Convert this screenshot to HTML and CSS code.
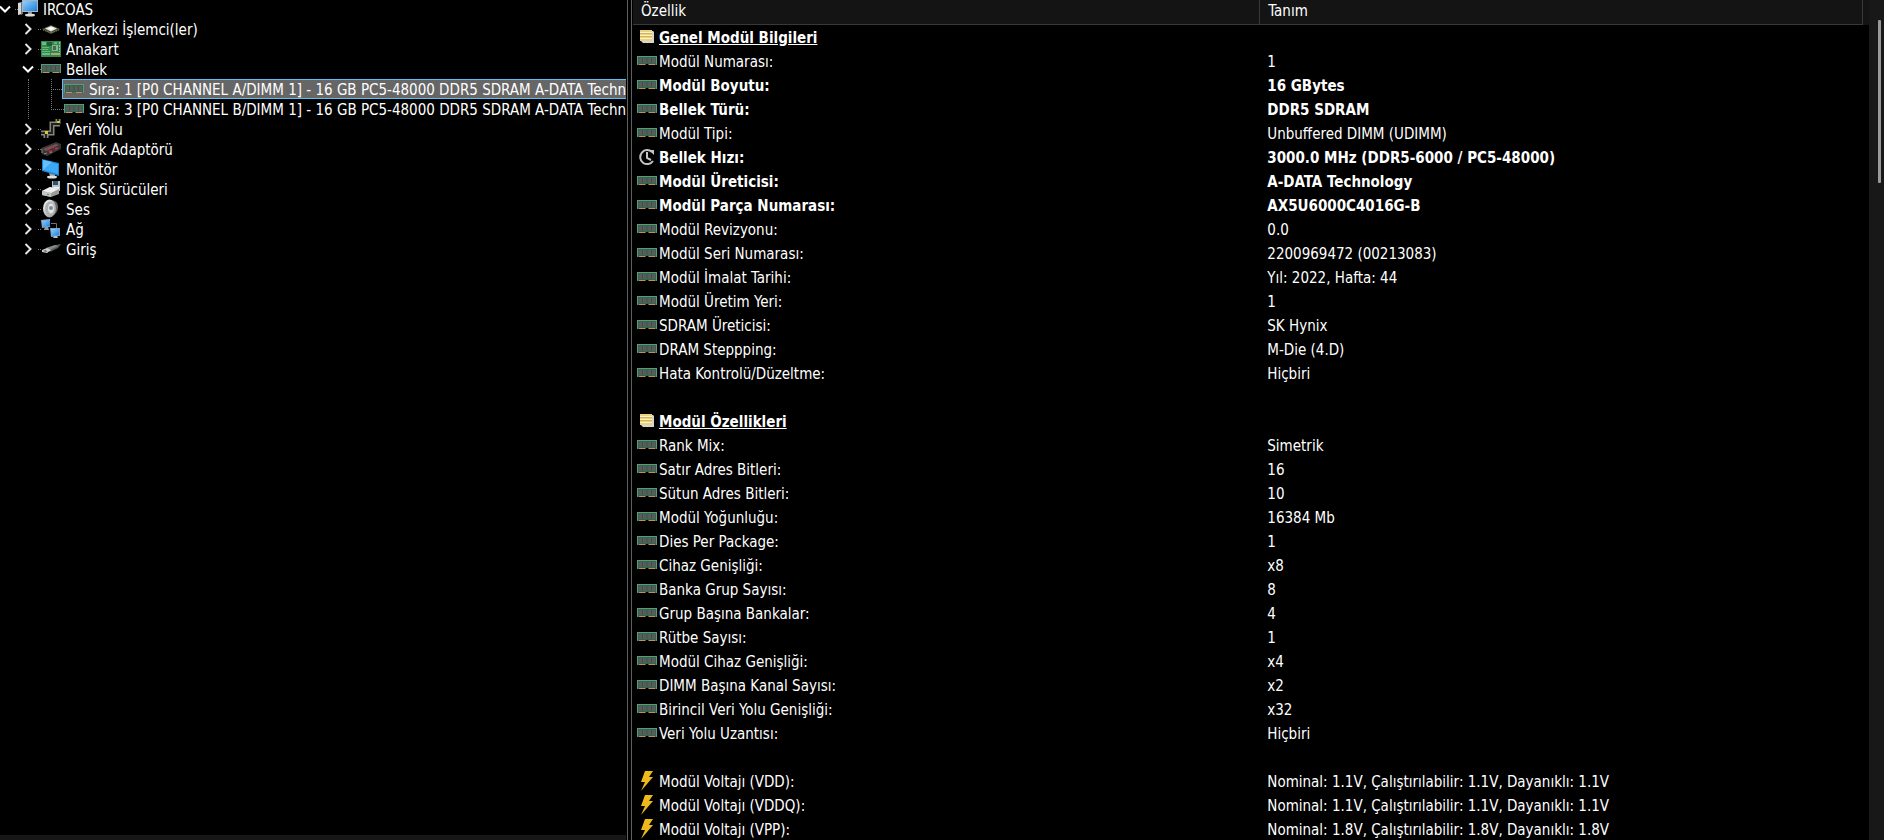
FILE: index.html
```html
<!DOCTYPE html>
<html lang="tr">
  <head>
    <meta charset="UTF-8" />
    <meta name="viewport" content="width=device-width, initial-scale=1.0" />
    <title>IRCOAS - Bellek</title>
    <link rel="stylesheet" href="styles.css">
  </head>

  <body>
    <!-- Simgeler -->
    <svg class="sprite" aria-hidden="true">
      <defs>
        <linearGradient id="blue" x1="0" y1="0" x2="1" y2="1">
          <stop offset="0" stop-color="#8fd0ff" />
          <stop offset="1" stop-color="#1c7fdc" />
        </linearGradient>
        <linearGradient id="silver" x1="0" y1="0" x2="1" y2="1">
          <stop offset="0" stop-color="#ffffff" />
          <stop offset="1" stop-color="#8c8c8c" />
        </linearGradient>
      </defs>
      <symbol id="right" viewBox="0 0 12 12">
        <path d="M3.500 1l5 5-5 5" fill="none" stroke="#e4e4e4" stroke-width="2" />
      </symbol>
      <symbol id="down" viewBox="0 0 12 12">
        <path d="M1 3.500l5 5 5-5" fill="none" stroke="#ffffff" stroke-width="2" />
      </symbol>
      <symbol id="computer" viewBox="0 0 20 20">
        <path d="M0 4l4-1v12l-4 1z" fill="#d8d8d8" />
        <path d="M3 3h2v12l-2 1z" fill="#777" />
        <path d="M4 1h16v12H4z" fill="#a9b4bd" />
        <path d="M5 2h14v10H5z" fill="url(#blue)" />
        <path d="M10 13h4v2h-4z" fill="#888" />
        <ellipse cx="12" cy="16" rx="5" ry="1.500" fill="#dcdcdc" />
      </symbol>
      <symbol id="cpu" viewBox="0 0 20 20">
        <path d="M1 10l9-4 9 4-9 5z" fill="#46523a" />
        <path d="M2 11l8 3 8-3" fill="none" stroke="#a08a4c" stroke-width="1" stroke-dasharray="1 1" />
        <path d="M4 9.500L10 7l6 2.500-6 3z" fill="#dfe3e0" />
        <path d="M7 9.500L10 8l3 1.500-3 1.500z" fill="#ffffff" />
      </symbol>
      <symbol id="board" viewBox="0 0 20 20">
        <path d="M0 2h20v16H0z" fill="#2f8a4c" />
        <path d="M1 3h4v3H1zM1 14h8v2H1z" fill="#6fb883" />
        <path d="M6 3h5v4H6z" fill="#1c5c33" />
        <path d="M11 6h6v6h-6z" fill="#8fae98" />
        <path d="M12 7h3v4h-3z" fill="#456a50" />
        <path d="M1 8.500h7M1 10.500h6M1 12.500h8" stroke="#69b47d" stroke-width="1" />
        <path d="M18.500 3v10" stroke="#8ccb9b" stroke-width="1" stroke-dasharray="2 1" />
        <path d="M10 14h9v2h-9z" fill="#b4a56a" />
        <path d="M13 3h3v2h-3z" fill="#5eb777" />
      </symbol>
      <symbol id="ram" viewBox="0 0 20 20">
        <path d="M0 5h20v9h-9v-1H9v1H0z" fill="#35644e" />
        <path d="M0 5.500h20M.5 5v9M19.500 5v9" stroke="#5a9a7b" stroke-width="1" />
        <path d="M2 7h3v5H2zM6 7h3v5H6zM11 7h3v5h-3zM15 7h3v5h-3z" fill="#585c5a" />
        <path d="M5.500 7v5M14.500 7v5" stroke="#444c48" stroke-width="1" />
        <path d="M2 13.500h6M12 13.500h6" stroke="#c49052" stroke-width="1" />
      </symbol>
      <symbol id="bus" viewBox="0 0 20 20">
        <path d="M5 19v-5H0M5 14h6V5h8M17 5V0" fill="none" stroke="#85857f" stroke-width="5" />
        <path d="M5 19v-5H0M5 14h6V5h8M17 5V0" fill="none" stroke="#24241f" stroke-width="2" />
        <path d="M4 12h3v3H4zM16 2h3v2h-3z" fill="#d6cb32" />
      </symbol>
      <symbol id="gpu" viewBox="0 0 20 20">
        <path d="M0 9l15-6 5 2v5L6 17l-5-2z" fill="#393637" />
        <path d="M2 10l13-5 3 1-13 6z" fill="#625d5e" />
        <path d="M5 9l3 2M10 7l3 2M8 13l3-1M14 10l3-1" stroke="#b32f39" stroke-width="2" />
        <path d="M3 15l3-1M9 14l2-1M1 10v4" stroke="#858585" stroke-width="1" />
      </symbol>
      <symbol id="monitor" viewBox="0 0 20 20">
        <path d="M8 13l6 1v4H9z" fill="#8d989f" />
        <ellipse cx="11" cy="18" rx="5" ry="1.500" fill="#e0e0e0" />
        <path d="M1 0l17 4v13L1 12z" fill="#1c83cc" />
        <path d="M2 1l15 4v10L2 11z" fill="#3ba9f7" />
        <path d="M2 1l9 2-9 8z" fill="#66befb" />
      </symbol>
      <symbol id="disk" viewBox="0 0 20 20">
        <path d="M11 2h8v10h-8z" fill="#b8c0c8" />
        <path d="M12 2h5v4h-5z" fill="#34536e" />
        <path d="M12 8h6v4h-6z" fill="#f4f4f4" />
        <path d="M1 12l8-4 9 2v5l-8 3-9-2z" fill="#9b9b9b" />
        <path d="M1 12l8-4 9 2-8 4z" fill="#eeeeee" />
        <path d="M1 12l9 2v4l-9-2z" fill="#c4c4c4" />
        <path d="M6 15h2v1H6z" fill="#2fae42" />
      </symbol>
      <symbol id="speaker" viewBox="0 0 20 20">
        <path d="M9 1c6 0 8 3 8 7s-2 7-7 10z" fill="#666" />
        <ellipse cx="8.500" cy="9.500" rx="6.500" ry="9" fill="url(#silver)" />
        <ellipse cx="9" cy="9.500" rx="5" ry="7" fill="#aeb4b6" />
        <ellipse cx="10" cy="9.500" rx="3" ry="5" fill="#dfe4e5" />
        <circle cx="10" cy="9" r="2" fill="#7f898c" />
      </symbol>
      <symbol id="network" viewBox="0 0 20 20">
        <path d="M10 4.500h5.500V9" fill="none" stroke="#6e7376" stroke-width="1" />
        <path d="M0 1l9-1v8l-8 1z" fill="#7fa3c8" />
        <path d="M1 2l8-1v6l-7 1z" fill="url(#blue)" />
        <path d="M4 8h3l1 3H3z" fill="#999" />
        <path d="M9 9h10v8l-9 1z" fill="#7fa3c8" />
        <path d="M10 10h8v6l-7 1z" fill="url(#blue)" />
        <path d="M13 17h3l1 2h-5z" fill="#bbb" />
      </symbol>
      <symbol id="input" viewBox="0 0 20 20">
        <path d="M6 9l9-3 5-1-3 4-8 4z" fill="#55585a" />
        <path d="M5 9l9-3 3 1-8 4z" fill="#878a8b" />
        <path d="M1 11l5-2 4 2-4 3-5-1z" fill="#cfcfcf" />
        <path d="M2 12l3-1 1 2z" fill="#575757" />
      </symbol>
      <symbol id="notes" viewBox="0 0 20 20">
        <path d="M4 4h12l1 1v11H6l-2-2z" fill="#d9d7cb" />
        <path d="M3 3h12v11H3z" fill="#ead184" />
        <path d="M3 5.500h12M3 8.500h12M3 11.500h12" stroke="#fff2c0" stroke-width="1" />
        <path d="M3 6.500h12M3 9.500h12" stroke="#d2b358" stroke-width="1" />
      </symbol>
      <symbol id="clock" viewBox="0 0 20 20">
        <path d="M15 5a7 7 0 1 0 1 9" fill="none" stroke="#c4c4c4" stroke-width="2" />
        <path d="M12 3l5 0v5z" fill="#c4c4c4" />
        <path d="M10 5v6l4 2" fill="none" stroke="#c4c4c4" stroke-width="2" />
      </symbol>
      <symbol id="bolt" viewBox="0 0 20 20">
        <path d="M8 0h8l-4 6h4L4 20l4-9H4z" fill="#edb91b" />
      </symbol>
    </svg>

    <main class="window">
      <!-- Donanım ağacı -->
      <nav class="tree-pane">
        <ul class="tree">
          <li>
            <div class="node"><button class="toggle" aria-label="Daralt"><svg><use href="#down" /></svg></button><a href="#"><svg class="icon"><use href="#computer" /></svg><span>IRCOAS</span></a></div>
            <ul>
              <li><div class="node"><button class="toggle" aria-label="Genişlet"><svg><use href="#right" /></svg></button><a href="#"><svg class="icon"><use href="#cpu" /></svg><span>Merkezi İşlemci(ler)</span></a></div></li>
              <li><div class="node"><button class="toggle" aria-label="Genişlet"><svg><use href="#right" /></svg></button><a href="#"><svg class="icon"><use href="#board" /></svg><span>Anakart</span></a></div></li>
              <li>
                <div class="node"><button class="toggle" aria-label="Daralt"><svg><use href="#down" /></svg></button><a href="#"><svg class="icon"><use href="#ram" /></svg><span>Bellek</span></a></div>
                <ul class="modules">
                  <li><div class="node"><span class="branch"></span><a href="#" class="selected"><svg class="icon"><use href="#ram" /></svg><span>Sıra: 1 [P0 CHANNEL A/DIMM 1] - 16 GB PC5-48000 DDR5 SDRAM A-DATA Technology</span></a></div></li>
                  <li><div class="node"><span class="branch"></span><a href="#"><svg class="icon"><use href="#ram" /></svg><span>Sıra: 3 [P0 CHANNEL B/DIMM 1] - 16 GB PC5-48000 DDR5 SDRAM A-DATA Technology</span></a></div></li>
                </ul>
              </li>
              <li><div class="node"><button class="toggle" aria-label="Genişlet"><svg><use href="#right" /></svg></button><a href="#"><svg class="icon"><use href="#bus" /></svg><span>Veri Yolu</span></a></div></li>
              <li><div class="node"><button class="toggle" aria-label="Genişlet"><svg><use href="#right" /></svg></button><a href="#"><svg class="icon"><use href="#gpu" /></svg><span>Grafik Adaptörü</span></a></div></li>
              <li><div class="node"><button class="toggle" aria-label="Genişlet"><svg><use href="#right" /></svg></button><a href="#"><svg class="icon"><use href="#monitor" /></svg><span>Monitör</span></a></div></li>
              <li><div class="node"><button class="toggle" aria-label="Genişlet"><svg><use href="#right" /></svg></button><a href="#"><svg class="icon"><use href="#disk" /></svg><span>Disk Sürücüleri</span></a></div></li>
              <li><div class="node"><button class="toggle" aria-label="Genişlet"><svg><use href="#right" /></svg></button><a href="#"><svg class="icon"><use href="#speaker" /></svg><span>Ses</span></a></div></li>
              <li><div class="node"><button class="toggle" aria-label="Genişlet"><svg><use href="#right" /></svg></button><a href="#"><svg class="icon"><use href="#network" /></svg><span>Ağ</span></a></div></li>
              <li><div class="node"><button class="toggle" aria-label="Genişlet"><svg><use href="#right" /></svg></button><a href="#"><svg class="icon"><use href="#input" /></svg><span>Giriş</span></a></div></li>
            </ul>
          </li>
        </ul>
        <div class="hscroll"></div>
      </nav>

      <!-- Özellik tablosu -->
      <section class="detail-pane">
        <div class="details">
          <table>
            <thead>
              <tr><th class="name-col">Özellik</th><th>Tanım</th></tr>
            </thead>
            <tbody>
              <tr class="group"><td><svg class="icon"><use href="#notes" /></svg><span>Genel Modül Bilgileri</span></td><td></td></tr>
              <tr><td><svg class="icon"><use href="#ram" /></svg>Modül Numarası:</td><td>1</td></tr>
              <tr class="strong"><td><svg class="icon"><use href="#ram" /></svg>Modül Boyutu:</td><td>16 GBytes</td></tr>
              <tr class="strong"><td><svg class="icon"><use href="#ram" /></svg>Bellek Türü:</td><td>DDR5 SDRAM</td></tr>
              <tr><td><svg class="icon"><use href="#ram" /></svg>Modül Tipi:</td><td>Unbuffered DIMM (UDIMM)</td></tr>
              <tr class="strong"><td><svg class="icon"><use href="#clock" /></svg>Bellek Hızı:</td><td>3000.0 MHz (DDR5-6000 / PC5-48000)</td></tr>
              <tr class="strong"><td><svg class="icon"><use href="#ram" /></svg>Modül Üreticisi:</td><td>A-DATA Technology</td></tr>
              <tr class="strong"><td><svg class="icon"><use href="#ram" /></svg>Modül Parça Numarası:</td><td>AX5U6000C4016G-B</td></tr>
              <tr><td><svg class="icon"><use href="#ram" /></svg>Modül Revizyonu:</td><td>0.0</td></tr>
              <tr><td><svg class="icon"><use href="#ram" /></svg>Modül Seri Numarası:</td><td>2200969472 (00213083)</td></tr>
              <tr><td><svg class="icon"><use href="#ram" /></svg>Modül İmalat Tarihi:</td><td>Yıl: 2022, Hafta: 44</td></tr>
              <tr><td><svg class="icon"><use href="#ram" /></svg>Modül Üretim Yeri:</td><td>1</td></tr>
              <tr><td><svg class="icon"><use href="#ram" /></svg>SDRAM Üreticisi:</td><td>SK Hynix</td></tr>
              <tr><td><svg class="icon"><use href="#ram" /></svg>DRAM Steppping:</td><td>M-Die (4.D)</td></tr>
              <tr><td><svg class="icon"><use href="#ram" /></svg>Hata Kontrolü/Düzeltme:</td><td>Hiçbiri</td></tr>
              <tr><td></td><td></td></tr>
              <tr class="group"><td><svg class="icon"><use href="#notes" /></svg><span>Modül Özellikleri</span></td><td></td></tr>
              <tr><td><svg class="icon"><use href="#ram" /></svg>Rank Mix:</td><td>Simetrik</td></tr>
              <tr><td><svg class="icon"><use href="#ram" /></svg>Satır Adres Bitleri:</td><td>16</td></tr>
              <tr><td><svg class="icon"><use href="#ram" /></svg>Sütun Adres Bitleri:</td><td>10</td></tr>
              <tr><td><svg class="icon"><use href="#ram" /></svg>Modül Yoğunluğu:</td><td>16384 Mb</td></tr>
              <tr><td><svg class="icon"><use href="#ram" /></svg>Dies Per Package:</td><td>1</td></tr>
              <tr><td><svg class="icon"><use href="#ram" /></svg>Cihaz Genişliği:</td><td>x8</td></tr>
              <tr><td><svg class="icon"><use href="#ram" /></svg>Banka Grup Sayısı:</td><td>8</td></tr>
              <tr><td><svg class="icon"><use href="#ram" /></svg>Grup Başına Bankalar:</td><td>4</td></tr>
              <tr><td><svg class="icon"><use href="#ram" /></svg>Rütbe Sayısı:</td><td>1</td></tr>
              <tr><td><svg class="icon"><use href="#ram" /></svg>Modül Cihaz Genişliği:</td><td>x4</td></tr>
              <tr><td><svg class="icon"><use href="#ram" /></svg>DIMM Başına Kanal Sayısı:</td><td>x2</td></tr>
              <tr><td><svg class="icon"><use href="#ram" /></svg>Birincil Veri Yolu Genişliği:</td><td>x32</td></tr>
              <tr><td><svg class="icon"><use href="#ram" /></svg>Veri Yolu Uzantısı:</td><td>Hiçbiri</td></tr>
              <tr><td></td><td></td></tr>
              <tr><td><svg class="icon"><use href="#bolt" /></svg>Modül Voltajı (VDD):</td><td>Nominal: 1.1V, Çalıştırılabilir: 1.1V, Dayanıklı: 1.1V</td></tr>
              <tr><td><svg class="icon"><use href="#bolt" /></svg>Modül Voltajı (VDDQ):</td><td>Nominal: 1.1V, Çalıştırılabilir: 1.1V, Dayanıklı: 1.1V</td></tr>
              <tr><td><svg class="icon"><use href="#bolt" /></svg>Modül Voltajı (VPP):</td><td>Nominal: 1.8V, Çalıştırılabilir: 1.8V, Dayanıklı: 1.8V</td></tr>
            </tbody>
          </table>
        </div>
        <div class="vscroll"><div class="thumb"></div></div>
      </section>
    </main>
  </body>
</html>
```
FILE: styles.css
```css
* {
  box-sizing: border-box;
}

body {
  margin: 0;
  background-color: #000;
  color: #fff;
  font-family: Tahoma, "DejaVu Sans Condensed", "Noto Sans", sans-serif;
  font-size: 15px;
  overflow: hidden;
}

.sprite {
  position: absolute;
  width: 0;
  height: 0;
}

.window {
  display: grid;
  grid-template-columns: 1fr 2fr;
  height: 100vh;
}

/* Sol panel */
.tree-pane {
  display: flex;
  flex-direction: column;
  justify-content: space-between;
  min-width: 0;
  border-right: 1px solid #606060;
}

ul {
  list-style: none;
  margin: 0;
  padding: 0;
}

.tree {
  margin: -1px 1px 0 0;
  overflow: hidden;
}

.tree ul {
  padding-left: 23px;
}

.node {
  display: flex;
  align-items: center;
  height: 20px;
  white-space: nowrap;
}

.node a {
  display: flex;
  flex: none;
  align-items: center;
  gap: 5px;
  height: 20px;
  margin-left: -2px;
  padding: 0 1px;
  border: 1px solid transparent;
  color: #fff;
  text-decoration: none;
}

.node a span {
  padding-top: 2px;
  line-height: 18px;
}

.node a.selected {
  background-color: #666;
  border-color: #5bc0f5;
}

.icon {
  flex: none;
  width: 20px;
  height: 20px;
}

.toggle {
  display: flex;
  flex: none;
  align-items: center;
  width: 18px;
  height: 20px;
  padding: 0;
  border: none;
  background: none;
  cursor: pointer;
}

.toggle svg {
  width: 12px;
  height: 12px;
  margin-left: -1px;
}

.toggle::after {
  content: "";
  width: 3px;
  margin-left: 4px;
  border-top: 1px dotted #777;
}

.modules {
  position: relative;
}

.modules::before {
  content: "";
  position: absolute;
  top: 0;
  bottom: 0;
  left: 5px;
  border-left: 1px dotted #777;
}

.branch {
  flex: none;
  align-self: flex-start;
  width: 13px;
  height: 11px;
  margin-left: 5px;
  border-left: 1px dotted #777;
  border-bottom: 1px dotted #777;
}

.modules li:not(:last-child) .node {
  background: repeating-linear-gradient(#777 0 1px, #000 1px 2px) 5px 0 / 1px 100% no-repeat;
}

.hscroll {
  height: 5px;
  margin-right: 1px;
  background-color: #171717;
}

/* Sağ panel */
.detail-pane {
  display: flex;
  min-width: 0;
  margin-left: 3px;
  padding-left: 1px;
  border-left: 1px solid #606060;
  overflow: hidden;
}

.details {
  flex: 1;
  min-width: 0;
  background: linear-gradient(#141414, #141414) top / 100% 25px no-repeat;
}

table {
  width: calc(100% - 6px);
  table-layout: fixed;
  border-collapse: separate;
  border-spacing: 0;
}

th {
  height: 25px;
  padding: 1px 8px 3px;
  border-right: 1px solid #383838;
  border-bottom: 1px solid #383838;
  font-weight: normal;
  line-height: 20px;
  text-align: left;
}

.name-col {
  width: 51%;
}

td {
  height: 24px;
  padding: 2px 7px 0;
  line-height: 22px;
  white-space: nowrap;
}

td:first-child {
  padding-left: 4px;
}

td .icon {
  margin-right: 2px;
  vertical-align: top;
}

.strong td,
.group td {
  font-weight: bold;
}

.group span {
  text-decoration: underline;
}

.vscroll {
  flex: none;
  width: 15px;
  padding: 20px 3px 0 9px;
  background-color: #181818;
}

.thumb {
  height: 163px;
  background-color: #9a9a9a;
  border-radius: 1px;
}
```
